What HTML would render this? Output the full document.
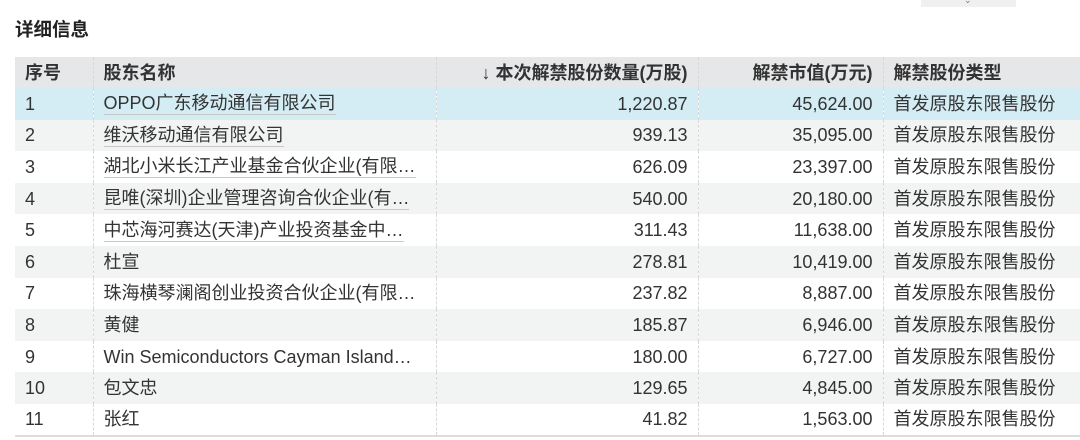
<!DOCTYPE html>
<html><head><meta charset="utf-8"><style>
body{margin:0;width:1080px;height:440px;background:#fff;overflow:hidden;font-family:"Liberation Sans","Noto Sans CJK SC",sans-serif;color:#333;position:relative}
.title{position:absolute;left:15px;top:18px;font-size:18.5px;line-height:24px;font-weight:bold;color:#222}
.btn{position:absolute;left:921px;top:0;width:95px;height:7px;background:#f0f0f0}
.btn span{position:absolute;left:43px;top:-5px;font-size:9px;color:#777}
table{position:absolute;left:15px;top:57px;width:1065px;border-collapse:collapse;font-size:18px;table-layout:fixed}
th{height:31px;line-height:20px;background:#e6e7e9;font-weight:bold;text-align:left;padding:0 10px;color:#333}
td{height:31.6px;line-height:20px;padding:0 10px;white-space:nowrap;overflow:hidden;box-sizing:border-box}
th,td{border-left:1px dashed #d8d8d8}
th:first-child,td:first-child{border-left:none}
tr:nth-child(even) td{background:#f2f3f3}
tr.hl td{background:#d4ecf4}
.r{text-align:right}
.n span{display:inline-block;max-width:332px;overflow:hidden;text-overflow:ellipsis;vertical-align:middle;border-bottom:1px solid #c8c8c8;line-height:22px}
tbody tr:last-child td{border-bottom:2px solid #ddd}
</style></head><body>
<div class="btn"><span>⌄</span></div>
<div class="title">详细信息</div>
<table>
<colgroup><col style="width:78px"><col style="width:343px"><col style="width:262px"><col style="width:185px"><col></colgroup>
<thead><tr><th>序号</th><th>股东名称</th><th class="r">↓ 本次解禁股份数量(万股)</th><th class="r">解禁市值(万元)</th><th>解禁股份类型</th></tr></thead>
<tbody>
<tr class="hl"><td>1</td><td class="n"><span>OPPO广东移动通信有限公司</span></td><td class="r">1,220.87</td><td class="r">45,624.00</td><td>首发原股东限售股份</td></tr>
<tr><td>2</td><td class="n"><span>维沃移动通信有限公司</span></td><td class="r">939.13</td><td class="r">35,095.00</td><td>首发原股东限售股份</td></tr>
<tr><td>3</td><td class="n"><span>湖北小米长江产业基金合伙企业(有限…</span></td><td class="r">626.09</td><td class="r">23,397.00</td><td>首发原股东限售股份</td></tr>
<tr><td>4</td><td class="n"><span>昆唯(深圳)企业管理咨询合伙企业(有…</span></td><td class="r">540.00</td><td class="r">20,180.00</td><td>首发原股东限售股份</td></tr>
<tr><td>5</td><td class="n"><span>中芯海河赛达(天津)产业投资基金中…</span></td><td class="r">311.43</td><td class="r">11,638.00</td><td>首发原股东限售股份</td></tr>
<tr><td>6</td><td>杜宣</td><td class="r">278.81</td><td class="r">10,419.00</td><td>首发原股东限售股份</td></tr>
<tr><td>7</td><td>珠海横琴澜阁创业投资合伙企业(有限…</td><td class="r">237.82</td><td class="r">8,887.00</td><td>首发原股东限售股份</td></tr>
<tr><td>8</td><td>黄健</td><td class="r">185.87</td><td class="r">6,946.00</td><td>首发原股东限售股份</td></tr>
<tr><td>9</td><td>Win Semiconductors Cayman Island…</td><td class="r">180.00</td><td class="r">6,727.00</td><td>首发原股东限售股份</td></tr>
<tr><td>10</td><td>包文忠</td><td class="r">129.65</td><td class="r">4,845.00</td><td>首发原股东限售股份</td></tr>
<tr><td>11</td><td>张红</td><td class="r">41.82</td><td class="r">1,563.00</td><td>首发原股东限售股份</td></tr>
</tbody></table>
</body></html>
